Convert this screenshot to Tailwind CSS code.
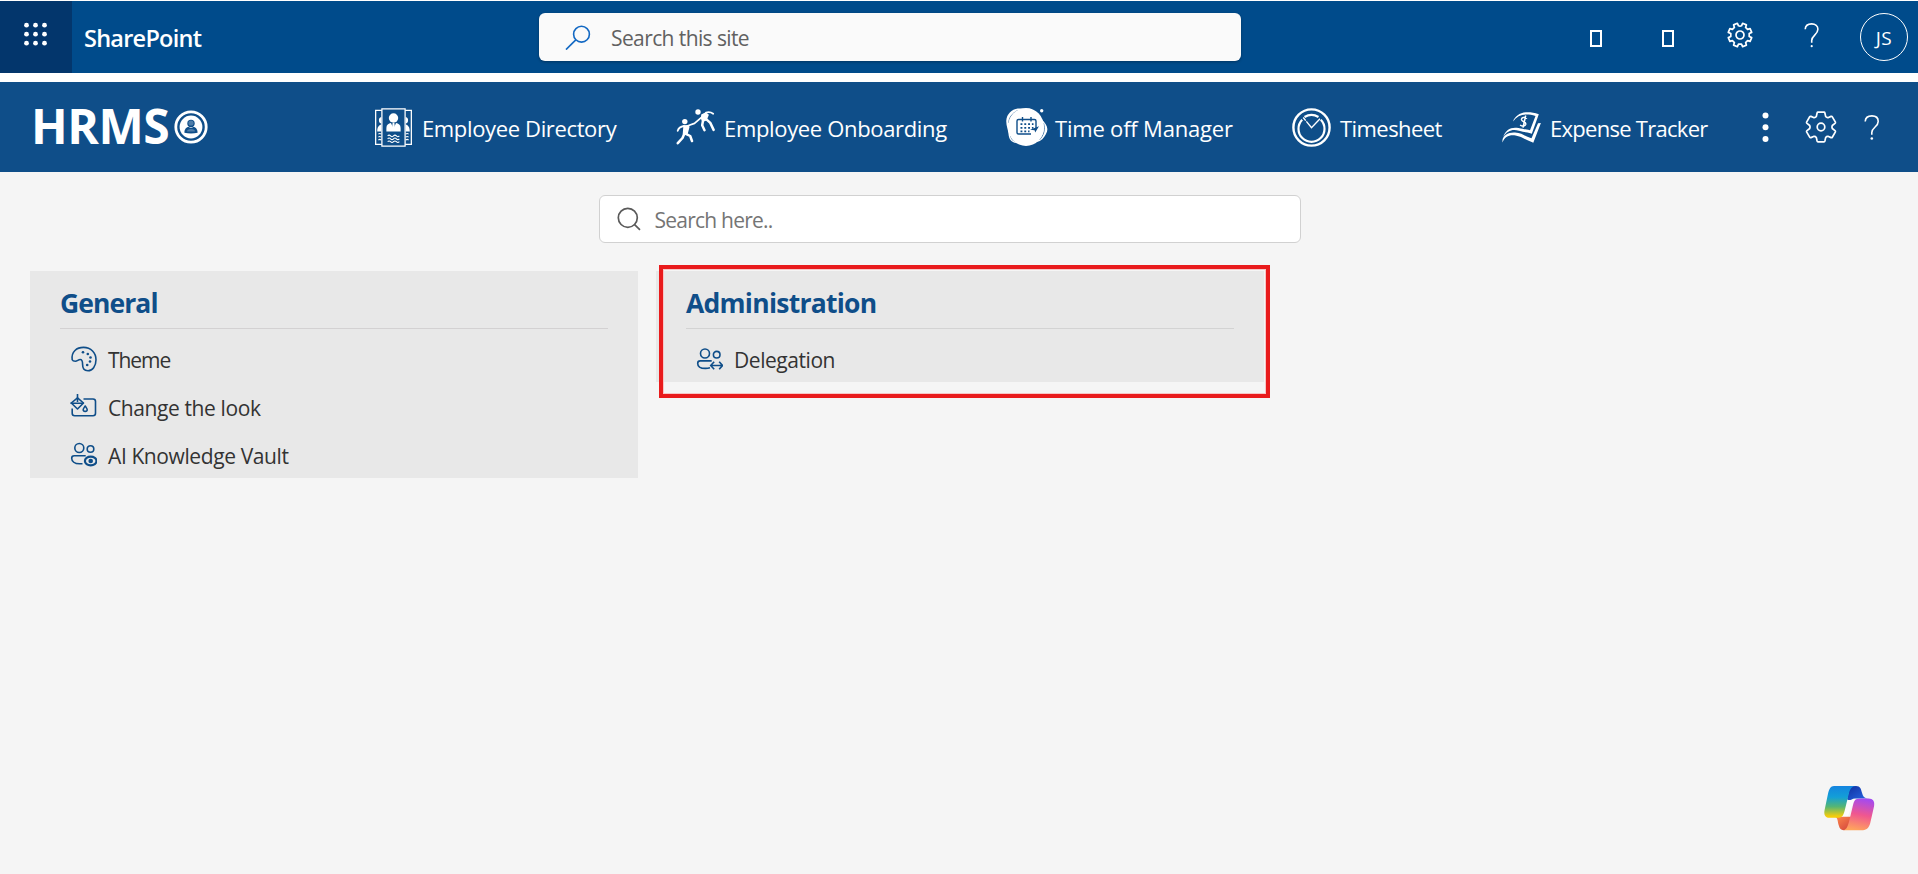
<!DOCTYPE html>
<html lang="en">
<head>
<meta charset="utf-8">
<title>HRMS - Settings</title>
<script src="https://cdn.jsdelivr.net/npm/@tailwindcss/browser@4"></script>
</head>
<body class="relative flex h-[874px] w-[1918px] flex-col overflow-hidden bg-white pt-px font-['Open_Sans','Noto_Sans',sans-serif] leading-none whitespace-nowrap">

<!-- Suite bar -->
<header class="flex h-[72px] shrink-0 items-center bg-[#004b8b] text-white">
  <button class="flex size-[72px] items-start bg-[#03366c] pt-[21px] pl-6">
    <svg class="size-6" viewBox="0 0 24 24" fill="#fff"><circle cx="2.5" cy="3.2" r="2.4"/><circle cx="11.5" cy="3.2" r="2.4"/><circle cx="20.5" cy="3.2" r="2.4"/><circle cx="2.5" cy="12.2" r="2.4"/><circle cx="11.5" cy="12.2" r="2.4"/><circle cx="20.5" cy="12.2" r="2.4"/><circle cx="2.5" cy="21.2" r="2.4"/><circle cx="11.5" cy="21.2" r="2.4"/><circle cx="20.5" cy="21.2" r="2.4"/></svg>
  </button>
  <div class="w-[467px] pt-1 pl-3 text-[23.5px] font-semibold tracking-[-0.75px]">SharePoint</div>
  <div class="flex h-12 w-[702px] items-center rounded-md bg-[#fafafa] pl-[26px] shadow-[0_1px_3px_rgba(0,0,0,0.3)]">
    <svg class="size-[26px]" viewBox="0 0 26 26" fill="none" stroke="#1268c3" stroke-width="1.6"><circle cx="16.500" cy="10.200" r="7.900"/><path d="M10.800 15.900L1 25.600"/></svg>
    <span class="pt-[3px] pl-5 text-[21px] tracking-[-0.6px] text-[#616161]">Search this site</span>
  </div>
  <div class="ml-[319px] flex h-full">
    <div class="flex w-[72px] items-center justify-center pt-[3px]"><span class="h-[17px] w-[12px] border-2 border-white"></span></div>
    <div class="flex w-[72px] items-center justify-center pt-[3px]"><span class="h-[17px] w-[12px] border-2 border-white"></span></div>
    <div class="flex w-[72px] justify-center pt-[21px]">
      <svg class="size-[26px]" viewBox="-13 -13 26 26" fill="none" stroke="#fff" stroke-width="1.7" stroke-linejoin="round"><path d="M0-8.800L1.500-9.200L2.600-11.700L6.400-10.100L5.600-7.600L7.600-5.600L10.100-6.400L11.700-2.600L9.200-1.500V1.500L11.700 2.600L10.100 6.400L7.600 5.600L5.600 7.600L6.400 10.100L2.600 11.700L1.500 9.200H-1.500L-2.600 11.700L-6.400 10.100L-5.600 7.600L-7.600 5.600L-10.100 6.400L-11.700 2.600L-9.200 1.500V-1.500L-11.700-2.600L-10.100-6.400L-7.600-5.600L-5.600-7.600L-6.400-10.100L-2.600-11.700L-1.500-9.200Z"/><circle r="4"/></svg>
    </div>
    <div class="flex w-[72px] justify-center pt-[22px]">
      <svg class="h-[25px] w-4" viewBox="0 0 16 25" fill="none" stroke="#fff" stroke-width="1.600"><path d="M1.200 6.200C1.400 2.800 4.200.9 7.600.9c3.800 0 6.300 2.200 6.300 5.400 0 5.400-6.200 6.200-6.200 11.200v2.300"/><circle cx="7.700" cy="23.200" r="1.100" fill="#fff" stroke="none"/></svg>
    </div>
    <div class="flex w-[70px] items-center pl-3">
      <div class="flex size-12 items-center justify-center rounded-full border border-white pt-[3px] text-[19px] font-medium tracking-[0.4px]">JS</div>
    </div>
  </div>
</header>

<!-- Application bar -->
<nav class="mt-[9px] flex h-[90px] shrink-0 items-center bg-[#0f4e89] pl-[31px] text-[22px] text-white">
  <div class="flex w-[343px] items-center">
    <span class="w-[135px] pb-[2px] text-[48px] font-bold tracking-[-0.5px]">HRMS</span>
    <svg class="ml-2 size-[34px]" viewBox="0 0 34 34"><circle cx="17" cy="17" r="15.200" fill="none" stroke="#fff" stroke-width="2.800"/><circle cx="17" cy="17" r="11.400" fill="#fff"/><circle cx="17" cy="13.400" r="3.700" fill="#0f4e89"/><circle cx="17" cy="13" r="2.600" fill="#4e7ca8"/><path d="M10.400 22.800c0-4 2.400-5.700 4.200-5.700 1.400 1 3.400 1 4.800 0 1.800 0 4.200 1.700 4.200 5.700-3.800 1-9.400 1-13.200 0Z" fill="#0f4e89"/><path d="M13 21.500c0-1.800 1.200-2.600 4-2.600s4 .8 4 2.600Z" fill="#4e7ca8"/></svg>
  </div>
  <a class="flex w-[302px] items-center gap-[9px]">
    <svg class="size-[39px]" viewBox="0 0 39 40" fill="none" stroke="#fff" stroke-width="1.300"><path d="M7.500 2.500H1.200v34.800h6.300M31.500 2.500h6.300v34.800h-6.300"/><rect x="7.600" y=".9" width="23.800" height="38.200"/><g fill="#fff" stroke="none"><circle cx="19.500" cy="10.300" r="4.800"/><path d="M12.200 24.200v-3.700c0-3.200 2.200-4.600 4.700-5l2.600 5.800 2.600-5.800c2.500.4 4.700 1.800 4.700 5v3.700Z"/><path d="M18.600 15.400h1.800l.6 5-1.500 2.600-1.500-2.600Z"/><path d="M7 9.300c-1.800.4-2.700 2-2.400 4 .2 1.500 1.100 2.500 2.400 2.700ZM7 17c-2.700.8-4.200 2.700-4.200 7.200H7ZM32 9.300c1.800.4 2.700 2 2.400 4-.2 1.500-1.100 2.500-2.400 2.700ZM32 17c2.700.8 4.200 2.700 4.200 7.200H32Z"/></g><path stroke-width="1.100" d="M13.500 28.600q1.500-1.600 3 0t3 0 3 0 3 0M13.500 31.600q1.500-1.600 3 0t3 0 3 0 3 0M13.500 34.600q1.500-1.600 3 0t3 0 3 0 3 0M4 26.800q1.500-1.200 3 0M4 29.800q1.500-1.200 3 0M4 32.800q1.500-1.200 3 0M32 26.800q1.500-1.200 3 0M32 29.800q1.500-1.200 3 0M32 32.800q1.500-1.200 3 0"/></svg>
    <span class="pt-px tracking-[-0.36px]">Employee Directory</span>
  </a>
  <a class="flex w-[329px] items-center gap-[9px]">
    <svg class="h-[36px] w-[39px]" viewBox="0 0 39 36" fill="none" stroke="#fff" stroke-linecap="round" stroke-linejoin="round"><g fill="#fff" stroke="none"><circle cx="8.800" cy="12.600" r="2.700"/><circle cx="22" cy="3" r="2.700"/><path d="M7.400 16.300L12 16l1.600 1.800L11.500 25.800l-4.800-.6ZM25.200 5.600l4.500-2.300 3.200 2.500-2.300 5.800-4.200 1.400-1.500-3.300Z"/></g><path stroke-width="1.800" d="M8 17C4.500 17.500 2.600 19 1.700 21.800M12.500 16.500l6-2.100 7.600-6.500M30 3.600c3-.9 5.200-.3 7.200 1.200"/><path stroke-width="2.500" d="M8.300 24.800L6.500 29 1.800 34.200M9.800 24.800l4.400 2.200 1.800 5M27 11.600l-.8 4.600 2.300 5M30.700 10.600l3.600 3.300 3.300 7"/></svg>
    <span class="pt-px tracking-[-0.34px]">Employee Onboarding</span>
  </a>
  <a class="flex w-[287px] items-center gap-[6px]">
    <svg class="h-[40px] w-[44px]" viewBox="0 0 44 40"><path d="M18 2C9-.2 1.800 6 1.300 13.500 1 19 3 22 3.500 27c.4 5 3 9 8 8.800ZM36 12c6 5 8 10 5 15-2 4-5 7-9 8Z" fill="#fff"/><path d="M13 3.300C6.500 6.500 4 11 3.700 16M38.500 16c2 6 .6 12-4.200 17M5.500 29q1 4.500 4.500 5.500" fill="none" stroke="#0f4e89" stroke-width=".7"/><ellipse cx="21" cy="20" rx="18" ry="19" fill="#fff"/><circle cx="36.700" cy="3.800" r="1.700" fill="#fff"/><g fill="none" stroke="#0f4e89" stroke-width="1.400"><path d="M26 27H13.500c-1 0-1.500-.5-1.500-1.500V14c0-1 .5-1.500 1.500-1.500h16c1 0 1.500.5 1.500 1.500v7M17.500 10v4.500M26 10v4.500"/><path stroke-width="1.700" stroke-dasharray="1.900 1.900" d="M15.500 17.200h13M15.500 20.800h13M15.500 24.300h9"/></g><path d="M34 19.300l-3.800 6.300-.6-2.300-4.600-.5Z" fill="#0f4e89"/></svg>
    <span class="pt-px tracking-[-0.2px]">Time off Manager</span>
  </a>
  <a class="flex w-[210px] items-center gap-[9px]">
    <svg class="size-[39px]" viewBox="0 0 39 39" fill="none" stroke="#fff"><circle cx="19.500" cy="19.500" r="18.100" stroke-width="2.400"/><path stroke-width="2.200" d="M10.200 11.700a13 13 0 1 0 18.600 0M12.500 9a13.500 13.500 0 0 1 14 0"/><path stroke-width="1.400" d="M11.200 9.500l8.300 10.200 8.500-9" stroke-dasharray="4 1 22"/></svg>
    <span class="pt-px tracking-[-0.56px]">Timesheet</span>
  </a>
  <a class="flex w-[257px] items-center gap-[9px]">
    <svg class="h-[33px] w-[39px]" viewBox="0 0 39 33" fill="#fff"><path d="M11 10.500C14 2.500 23-1.500 36.800 3.200L29.800 22.700C24 20.500 22 21.500 17 19.800 10.500 18 5.500 19.500 1.200 26 3.500 18.500 9.500 15.500 16.500 17 21.500 18.100 23.500 18.300 28 19.300L33.500 5C23 2 16 3.800 11 10.500Z"/><path d="M.6 31.500C-.8 25 6 21 13 21.500c8 .5 10.500 4.500 16.500 5.700L36 12.300l2.900-.4L31.300 31.700C23 29 20 25.500 13.500 24.500 7 23.600 2.500 26 .6 31.500Z"/><path d="M25 7.500c-2.600-2-6-.9-5.400 1.400.6 2 4.600 2 4.200 4.300-.4 2-3.500 2.500-5.700.8M23.700 4.500l-2.700 12.200" fill="none" stroke="#fff" stroke-width="1.500"/></svg>
    <span class="pt-px tracking-[-0.72px]">Expense Tracker</span>
  </a>
  <svg class="h-[32px] w-[14px]" viewBox="0 0 14 32" fill="#fff"><circle cx="6.500" cy="4.500" r="3"/><circle cx="6.500" cy="16.300" r="3"/><circle cx="6.500" cy="28" r="3"/></svg>
  <svg class="ml-8 size-[32px]" viewBox="-16 -16 32 32" fill="none" stroke="#fff" stroke-width="1.700" stroke-linejoin="round"><path d="M-3-14.800H3Q3.700-14.800 3.900-14L4.700-10.400Q5.600-9.200 6.900-9.300L10-10.600Q10.900-10.900 11.300-10.200L14.400-4.900Q14.700-4.200 14-3.600L11.300-1.500Q10.500 0 11.300 1.500L14 3.600Q14.700 4.200 14.400 4.900L11.300 10.200Q10.900 10.900 10 10.600L6.900 9.300Q5.600 9.200 4.700 10.400L3.900 14Q3.700 14.800 3 14.800H-3Q-3.700 14.800-3.900 14L-4.700 10.400Q-5.600 9.200-6.900 9.300L-10 10.600Q-10.900 10.900-11.300 10.200L-14.400 4.900Q-14.700 4.200-14 3.600L-11.300 1.500Q-10.500 0-11.300-1.500L-14-3.600Q-14.700-4.200-14.400-4.900L-11.300-10.200Q-10.900-10.900-10-10.600L-6.900-9.300Q-5.600-9.200-4.700-10.400L-3.900-14Q-3.700-14.800-3-14.800Z"/><circle r="3.800"/></svg>
  <svg class="ml-[27px] h-[25px] w-4" viewBox="0 0 16 25" fill="none" stroke="#fff" stroke-width="1.600"><path d="M1.200 6.500C1.400 2.800 4.200.9 7.900.9c4 0 6.300 2.200 6.300 5.500 0 5.600-6.400 6-6.400 11v2.400"/><circle cx="7.800" cy="23.500" r="1.300" fill="#fff" stroke="none"/></svg>
</nav>

<main class="flex-1 bg-[#f5f5f5] pt-[23px]">
  <div class="ml-[599px] flex h-12 w-[702px] items-center rounded-md border border-[#d1d1d1] bg-white pl-[17px]">
    <svg class="mb-px size-6" viewBox="0 0 24 24" fill="none" stroke="#5a5a5a" stroke-width="1.700"><circle cx="10.800" cy="10.800" r="9.500"/><path d="M17.600 17.600l5.400 5.200"/></svg>
    <span class="pt-[3px] pl-[13.500px] text-[21px] tracking-[-0.77px] text-[#757575]">Search here..</span>
  </div>

  <div class="mt-7 flex items-start gap-[18px] pl-[30px] text-[21px] text-[#333]">
    <section class="h-[207px] w-[608px] bg-[#e8e8e8] px-[30px]">
      <h2 class="flex h-[58px] items-center border-b border-[#d3d1d2] pt-[7px] text-[26.500px] font-bold tracking-[-0.93px] text-[#0f4e89]">General</h2>
      <ul class="pt-[6px] pl-[10px]">
        <li class="flex h-12 items-center gap-[11px]">
          <svg class="size-[27px]" viewBox="0 0 27 27" fill="none" stroke="#0f4e89" stroke-width="1.600"><path d="M2.200 13.800C1 5.500 7 1.400 13.500 1.400c7.500 0 12.500 5.400 12.500 12.300 0 6.600-3.600 11-8 11-4.200 0-5.400-2.600-5.400-6.200 0-3.400-.4-5-2.400-5-1.800 0-3 1.700-4.800 1.700-1.400 0-2.800-.5-3.200-1.400Z"/><g fill="#0f4e89" stroke="none"><circle cx="13" cy="6.300" r="1.300"/><circle cx="17.800" cy="8" r="1.300"/><circle cx="20.500" cy="11.500" r="1.300"/><circle cx="20" cy="15.500" r="1.300"/><circle cx="17.200" cy="19" r="1.300"/></g></svg>
          <span class="pt-[2px] tracking-[-1.05px]">Theme</span></li>
        <li class="flex h-12 items-center gap-[11px]">
          <svg class="mb-1 h-[25px] w-[27px]" viewBox="0 0 27 25" fill="none" stroke="#0f4e89" stroke-width="1.600" stroke-linejoin="round"><path d="M13.500 6H23q2.500 0 2.500 2.500v11.700q0 2.500-2.500 2.500H4.700q-2.500 0-2.500-2.500V15.500"/><path d="M7.500 4.800l6 5.200-6 6-6.200-6Z"/><path d="M.5 10.200h13M7.500 1v8"/><path d="M15.200 13c1.300 2 2 2.800 2 3.700 0 2.200-4 2.200-4 0 0-.9.700-1.700 2-3.700Z"/></svg>
          <span class="pt-[2px] tracking-[-0.4px]">Change the look</span></li>
        <li class="flex h-12 items-center gap-[11px]">
          <svg class="mb-[2px] h-[25px] w-[27px]" viewBox="0 0 27 25" fill="none" stroke="#0f4e89" stroke-width="1.600"><circle cx="9.300" cy="6" r="4.500"/><circle cx="20.500" cy="7" r="3.300"/><path d="M15.700 13.700H4.200q-2.500 0-2.500 2.500c0 3 2.800 5.600 7.800 5.600h3"/><ellipse cx="20.700" cy="19" rx="5.800" ry="4.300" stroke-width="2.200"/><circle cx="20.700" cy="19" r="2.300" fill="#0f4e89" stroke="none"/></svg>
          <span class="pt-[2px] tracking-[-0.4px]">AI Knowledge Vault</span></li>
      </ul>
    </section>
    <section class="h-[111px] w-[608px] bg-[#e8e8e8] px-[30px]">
      <h2 class="flex h-[58px] items-center border-b border-[#d3d3d3] pt-[7px] text-[26.500px] font-bold tracking-[-0.74px] text-[#0f4e89]">Administration</h2>
      <ul class="pt-[6px] pl-[10px]">
        <li class="flex h-12 items-center gap-[11px]">
          <svg class="h-[23px] w-[27px]" viewBox="0 0 27 23" fill="none" stroke="#0f4e89" stroke-width="1.600"><circle cx="9" cy="5.500" r="4.500"/><circle cx="20.700" cy="6.700" r="3.300"/><path d="M15.700 12.900H4.200q-2.500 0-2.500 2.500c0 3 2.800 5 7.800 5q2.500 0 4.500-.6"/><path d="M15.500 17.500h11M18.200 13.700l-3.500 3.800 3.500 3.800M23.200 13.700l3.300 3.800-3.300 3.800"/></svg>
          <span class="pt-[2px] tracking-[-0.45px]">Delegation</span></li>
      </ul>
    </section>
  </div>
</main>

<!-- Highlight around the Administration card -->
<div class="absolute top-[265px] left-[659px] h-[133px] w-[611px] border-4 border-[#e91b1c] outline-1 -outline-offset-[5px] outline-[#f7c6c6]"></div>

<!-- Copilot launcher -->
<svg class="absolute top-[785px] left-[1823px] h-[46px] w-[52px]" viewBox="0 0 52 47" preserveAspectRatio="none">
  <defs>
    <linearGradient id="left" x1="0" y1="0" x2="0" y2="1"><stop offset="0" stop-color="#1484e0"/><stop offset=".35" stop-color="#139fd7"/><stop offset=".65" stop-color="#55b674"/><stop offset=".95" stop-color="#f5cd0b"/></linearGradient>
    <linearGradient id="right" x1=".6" y1="0" x2=".4" y2="1"><stop offset="0" stop-color="#a44af0"/><stop offset=".5" stop-color="#f0578f"/><stop offset="1" stop-color="#ffa55c"/></linearGradient>
    <linearGradient id="blue" x1="0" y1="0" x2="1" y2="1"><stop offset="0" stop-color="#0f2fa0"/><stop offset="1" stop-color="#2768e4"/></linearGradient>
    <linearGradient id="orange" x1="0" y1="0" x2="1" y2="1"><stop offset="0" stop-color="#ff8a4c"/><stop offset="1" stop-color="#cf3f3c"/></linearGradient>
  </defs>
  <path d="M20 14H32L24 34H18Z" fill="#fcfcfc"/>
  <path d="M24 14.500L27 1H33c4.500 0 5 3 6 7 1 4 2.500 5.500 6 5.700H32c-4 .3-4.500 3-8 .8Z" fill="url(#blue)"/>
  <path d="M12 32.500c3 1 2.500 5 3.800 9 1 3.500 2.200 4.700 4.700 4.700l6-1 3-12.700Z" fill="url(#orange)"/>
  <path d="M11 1H33c-4 0-6 3-7.200 8L21.700 26c-1.500 6-3 7.500-7 7.500H6.500C2 33.500.6 30 1.600 25.500L5 9C6.200 4 7.500 1 11 1Z" fill="url(#left)"/>
  <path d="M41 13.700c-9 0-9.500 0-11.500 9L26 37.500c-1.600 6-3 8.700-6.500 8.700H40c4 0 6-2.700 7.200-7L51 22c1-5.500-1-8.300-5.500-8.300Z" fill="url(#right)"/>
</svg>
</body>
</html>
